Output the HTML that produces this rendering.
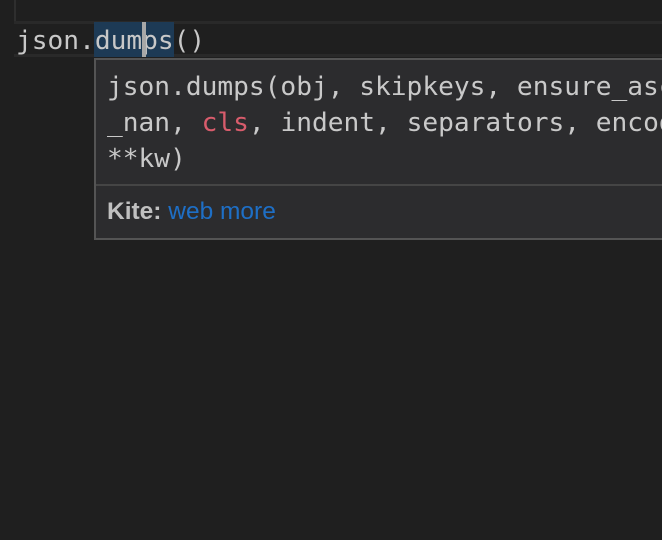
<!DOCTYPE html>
<html><head><meta charset="utf-8"><style>
html,body{margin:0;padding:0;background:#1f1f1f;width:662px;height:540px;overflow:hidden;position:relative}
.mono{font-family:"DejaVu Sans Mono","Liberation Mono",monospace;font-size:26.2px;white-space:pre}
#vl{position:absolute;left:14px;top:0;width:2px;height:22px;background:#2e2e2e}
#band{position:absolute;left:14px;top:21px;width:648px;height:36px;box-sizing:border-box;border-top:3px solid #292929;border-bottom:3px solid #292929;background:#1f1f1f}
#sel{position:absolute;left:94px;top:22px;width:80px;height:35px;background:#1d3a55}
#cur{position:absolute;left:142px;top:22px;width:4px;height:35px;background:#a8a8a8}
#code{position:absolute;left:16px;top:23px;line-height:36px;color:#c8c8c8}
#pop{position:absolute;left:94px;top:58px;width:568px;height:182px;box-sizing:border-box;border:2px solid #545454;border-right:none;background:#2c2c2e;overflow:hidden}
#sig{position:absolute;left:11px;top:9px;line-height:36px;color:#c9c9c9}
.r{color:#d85c6c}
#sep{position:absolute;left:0;top:124px;width:100%;height:2px;background:#454545}
#foot{position:absolute;left:11px;top:138px;font-family:"Liberation Sans",Arial,sans-serif;font-size:24.5px;color:#c0c0c0}
#foot b{font-weight:bold}
#foot span{color:#1e6fc6}
</style></head><body>
<div id="vl"></div>
<div id="band"></div>
<div id="sel"></div>
<div id="code" class="mono">json.dumps()</div>
<div id="cur"></div>
<div id="pop">
<div id="sig" class="mono">json.dumps(obj, skipkeys, ensure_ascii
_nan, <span class="r">cls</span>, indent, separators, encoding
**kw)</div>
<div id="sep"></div>
<div id="foot"><b>Kite:</b> <span>web more</span></div>
</div>
</body></html>
